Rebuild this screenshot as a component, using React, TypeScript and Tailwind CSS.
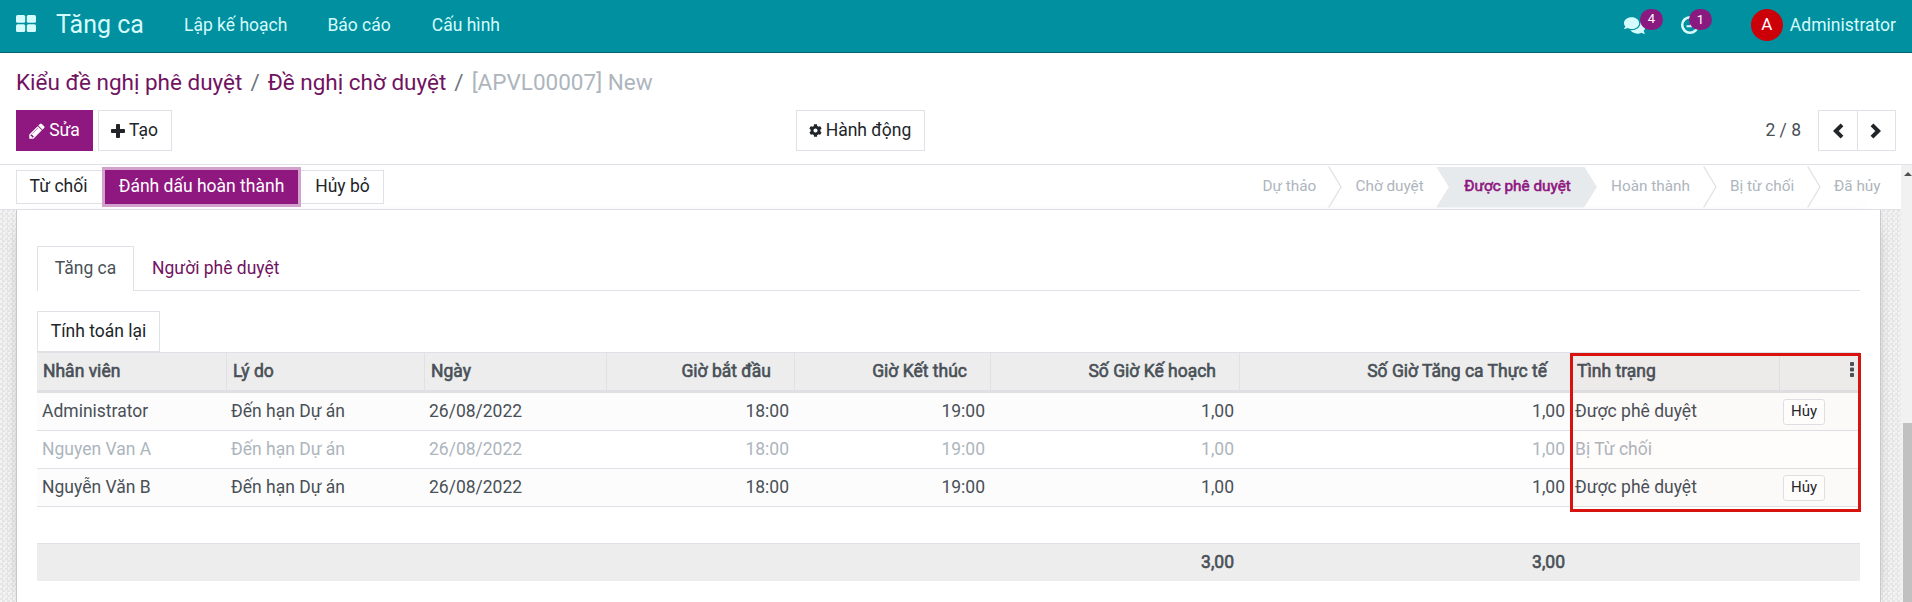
import { FaCog, FaComments } from "react-icons/fa";

interface Line {
  employee: string;
  reason: string;
  date: string;
  start: string;
  end: string;
  planned: string;
  actual: string;
  status: string;
  muted?: boolean;
}

const lines: Line[] = [
  { employee: "Administrator", reason: "Đến hạn Dự án", date: "26/08/2022", start: "18:00", end: "19:00", planned: "1,00", actual: "1,00", status: "Được phê duyệt" },
  { employee: "Nguyen Van A", reason: "Đến hạn Dự án", date: "26/08/2022", start: "18:00", end: "19:00", planned: "1,00", actual: "1,00", status: "Bị Từ chối", muted: true },
  { employee: "Nguyễn Văn B", reason: "Đến hạn Dự án", date: "26/08/2022", start: "18:00", end: "19:00", planned: "1,00", actual: "1,00", status: "Được phê duyệt" },
];

const columns = [
  { label: "Nhân viên", numeric: false },
  { label: "Lý do", numeric: false },
  { label: "Ngày", numeric: false },
  { label: "Giờ bắt đầu", numeric: true },
  { label: "Giờ Kết thúc", numeric: true },
  { label: "Số Giờ Kế hoạch", numeric: true },
  { label: "Số Giờ Tăng ca Thực tế", numeric: true },
  { label: "Tình trạng", numeric: false },
];

const gridCols = "grid grid-cols-[190px_198px_182px_188px_196px_249px_331px_209px_80px]";

function AppsIcon() {
  return (
    <svg viewBox="0 0 20 17" className="h-[17px] w-5" fill="currentColor">
      <rect width="9.2" height="7.8" rx="1.6" />
      <rect x="10.8" width="9.2" height="7.8" rx="1.6" />
      <rect y="9.2" width="9.2" height="7.8" rx="1.6" />
      <rect x="10.8" y="9.2" width="9.2" height="7.8" rx="1.6" />
    </svg>
  );
}

function PencilIcon() {
  return (
    <svg viewBox="0 0 1792 1792" className="h-[18px] w-[18px]" fill="currentColor">
      <path d="M491 1536l91-91-235-235-91 91v107h128v128h107zm523-928q0-22-22-22-10 0-17 7l-542 542q-7 7-7 17 0 22 22 22 10 0 17-7l542-542q7-7 7-17zm-54-192l416 416-832 832h-416v-416zm683 96q0 53-37 90l-166 166-416-416 166-165q36-38 90-38 53 0 91 38l235 234q37 39 37 91z" />
    </svg>
  );
}

function PlusIcon() {
  return (
    <svg viewBox="0 0 14 14" className="h-[14px] w-[14px]" fill="currentColor">
      <rect x="5" width="4" height="14" rx="0.9" />
      <rect y="5" width="14" height="4" rx="0.9" />
    </svg>
  );
}

function Chevron({ right }: { right?: boolean }) {
  return (
    <svg viewBox="0 0 11 16" className="h-4 w-[11px]" fill="none" stroke="currentColor" strokeWidth="4">
      <path d={right ? "M2 1.8L8.2 8L2 14.2" : "M9 1.8L2.8 8L9 14.2"} />
    </svg>
  );
}

function Badge({ value, className }: { value: string; className: string }) {
  return (
    <span className={`absolute -top-1.5 flex h-[21px] w-[23px] items-center justify-center rounded-full bg-[#8a1a7f] text-[13px] text-white ${className}`}>
      {value}
    </span>
  );
}

function Navbar() {
  return (
    <nav className="flex h-[53px] items-center border-b border-[#03606c] bg-[#00909f] pb-0.5 pl-4 pr-4 text-[#d5fbfd]">
      <div className="pb-[3px]">
        <AppsIcon />
      </div>
      <span className="ml-5 w-[87px] whitespace-nowrap text-[25px]">Tăng ca</span>
      <span className="ml-[41px]">Lập kế hoạch</span>
      <span className="ml-10">Báo cáo</span>
      <span className="ml-[41px]">Cấu hình</span>
      <div className="ml-auto flex items-center">
        <div className="relative mr-[35px]">
          <FaComments className="h-[21px] w-[21px]" />
          <Badge value="4" className="left-4" />
        </div>
        <div className="relative mr-[51px]">
          <svg viewBox="0 0 20 20" className="h-5 w-5" fill="none" stroke="currentColor" strokeWidth="2.6">
            <circle cx="10" cy="10" r="7.8" />
            <path d="M11 5.5v5.8h-4.5" strokeWidth="2" />
          </svg>
          <Badge value="1" className="left-[9px]" />
        </div>
        <span className="flex h-8 w-8 items-center justify-center rounded-full bg-[#cc0008] text-[17px] text-white">A</span>
        <span className="ml-[7px]">Administrator</span>
      </div>
    </nav>
  );
}

function ControlPanel() {
  return (
    <div className="h-[112px] border-b border-[#dee2e6] px-4">
      <div className="flex h-[57px] items-center whitespace-nowrap pt-0.5 text-[22.5px] text-[#6c757d]">
        <a className="text-[#71135f]">Kiểu đề nghị phê duyệt</a>
        <span className="px-2">/</span>
        <a className="text-[#71135f]">Đề nghị chờ duyệt</a>
        <span className="px-2">/</span>
        <span className="text-[#adb5bd]">[APVL00007] New</span>
      </div>
      <div className="grid grid-cols-[780px_1fr_auto] items-center text-[#212529]">
        <div className="flex gap-[5px]">
          <button className="flex h-[41px] w-[77px] items-center justify-center gap-[3px] bg-[#8f1780] pr-px text-white">
            <PencilIcon />
            Sửa
          </button>
          <button className="flex h-[41px] w-[74px] items-center justify-center gap-1 border border-[#dee2e6] pr-px">
            <PlusIcon />
            Tạo
          </button>
        </div>
        <div>
          <button className="flex h-[41px] w-[129px] items-center justify-center gap-1 border border-[#dee2e6] pr-px">
            <FaCog className="h-[13px] w-[13px]" />
            Hành động
          </button>
        </div>
        <div className="flex items-center">
          <span className="mr-[17px] text-[#495057]">2 / 8</span>
          <button className="flex h-[41px] w-[40px] items-center justify-center border border-[#dee2e6]">
            <Chevron />
          </button>
          <button className="-ml-px flex h-[41px] w-[39px] items-center justify-center border border-[#dee2e6] pr-0.5">
            <Chevron right />
          </button>
        </div>
      </div>
    </div>
  );
}

function Separator() {
  return (
    <svg viewBox="0 0 14 42" className="h-[42px] w-[14px] shrink-0" fill="none" stroke="#dee2e6" strokeWidth="1.3">
      <path d="M0.7 0.5L13 21L0.7 41.5" />
    </svg>
  );
}

function StatusBar() {
  return (
    <div className="flex h-[45px] items-center border-b border-[#dee2e6] bg-white pl-4 text-[#212529]">
      <button className="h-[34px] w-[88px] border border-[#dee2e6] pb-0.5 pr-[3px]">Từ chối</button>
      <button className="z-10 ml-px h-[34px] w-[193px] bg-[#8f1780] pb-0.5 text-white ring-3 ring-[#d3a2cc]">Đánh dấu hoàn thành</button>
      <button className="h-[34px] w-[86px] border border-[#dee2e6] pb-0.5 pl-[3px]">Hủy bỏ</button>
      <div className="ml-auto flex items-center whitespace-nowrap text-[15.3px] text-[#adb5bd]">
        <span className="w-[65px] pb-0.5">Dự thảo</span>
        <Separator />
        <span className="w-[94.5px] pb-0.5 pl-[14px]">Chờ duyệt</span>
        <div className="flex h-[41px] w-[161px] items-center justify-center bg-[#e7eaed] pb-0.5 pl-0.5 text-[#8f1780] [-webkit-text-stroke:0.6px] [clip-path:polygon(0_0,92%_0,100%_50%,92%_100%,0_100%,8%_50%)]">
          Được phê duyệt
        </div>
        <span className="w-[106px] pb-0.5 pl-[14px]">Hoàn thành</span>
        <Separator />
        <span className="w-[90px] pb-0.5 pl-[13px]">Bị từ chối</span>
        <Separator />
        <span className="w-[80px] pb-0.5 pl-[13px]">Đã hủy</span>
      </div>
    </div>
  );
}

function LinesTable() {
  return (
    <div className="relative text-[#495057]">
      <div className={`${gridCols} h-[41px] border-b-3 border-t border-b-[#dee0e3] border-t-[#dee2e6] bg-[#ededed] [-webkit-text-stroke:0.6px]`}>
        {columns.map((col) => (
          <div
            key={col.label}
            className={`flex items-center whitespace-nowrap border-r border-[#dee2e6] pb-px pl-1.5 ${col.numeric ? "justify-end pr-[23px]" : ""}`}
          >
            {col.label}
          </div>
        ))}
        <div className="flex items-center justify-end pb-1 pr-1.5">
          <svg viewBox="0 0 4 15" className="h-[15px] w-1" fill="currentColor">
            <rect width="4" height="4" rx="0.8" />
            <rect y="5.5" width="4" height="4" rx="0.8" />
            <rect y="11" width="4" height="4" rx="0.8" />
          </svg>
        </div>
      </div>
      {lines.map((line) => (
        <div
          key={line.employee}
          className={`${gridCols} h-[38px] items-center border-b border-[#dee2e6] ${line.muted ? "text-[#adb5bd]" : "bg-[#fcfcfc]"}`}
        >
          <span className="pl-[5px]">{line.employee}</span>
          <span className="pl-1">{line.reason}</span>
          <span className="pl-1">{line.date}</span>
          <span className="pr-1.5 text-right">{line.start}</span>
          <span className="pr-1.5 text-right">{line.end}</span>
          <span className="pr-1.5 text-right">{line.planned}</span>
          <span className="pr-1.5 text-right">{line.actual}</span>
          <span className="pl-1">{line.status}</span>
          {!line.muted && (
            <button className="ml-[3px] h-[26px] w-[42px] rounded-[3px] border border-[#dee2e6] bg-white text-[15px] leading-none text-[#212529]">
              Hủy
            </button>
          )}
        </div>
      ))}
      <div className="h-9" />
      <div className={`${gridCols} h-[38px] items-center border-t border-[#dee2e6] bg-[#ededed] [-webkit-text-stroke:0.6px]`}>
        <span className="col-span-6 pr-1.5 text-right">3,00</span>
        <span className="pr-1.5 text-right">3,00</span>
      </div>
      {/* highlight around the status and action columns */}
      <div className="absolute left-[1533px] top-px h-[159px] w-[291px] border-3 border-[#d8130f] bg-[#ff0000]/[0.01]" />
    </div>
  );
}

export default function App() {
  return (
    <div className="h-[602px] w-[1912px] overflow-hidden bg-white font-[Roboto,'Noto_Sans',sans-serif] text-[17.5px] leading-normal">
      <Navbar />
      <ControlPanel />
      <div className="flex h-[437px]">
        <div className="w-[1901px]">
          <StatusBar />
          <div className="h-[392px] bg-[repeating-conic-gradient(#e6e6e6_0_25%,#f3f3f3_0_50%)] bg-[length:5px_5px] pl-4 pr-5">
            <div className="h-full border-x border-[#c8c8d3] bg-white pl-5 pr-5 pt-9 shadow-[0_5px_20px_-15px_black]">
              <div className="flex h-[45px] border-b border-[#dee2e6]">
                <div className="h-[45px] w-[97px] border border-b-0 border-[#dee2e6] bg-white pt-[8px] text-center text-[#495057]">Tăng ca</div>
                <div className="pl-[18px] pt-[9px] text-[#71135f]">Người phê duyệt</div>
              </div>
              <button className="mt-5 block h-[41px] w-[123px] border border-[#dee2e6] text-[#212529]">Tính toán lại</button>
              <LinesTable />
            </div>
          </div>
        </div>
        <div className="flex w-[11px] flex-col items-end bg-[#f1f1f1]">
          <div className="mt-[7px] border-x-4 border-b-4 border-x-transparent border-b-[#505050]" />
          <div className="mt-auto h-[179px] w-[9px] bg-[#c1c1c1]" />
        </div>
      </div>
    </div>
  );
}
